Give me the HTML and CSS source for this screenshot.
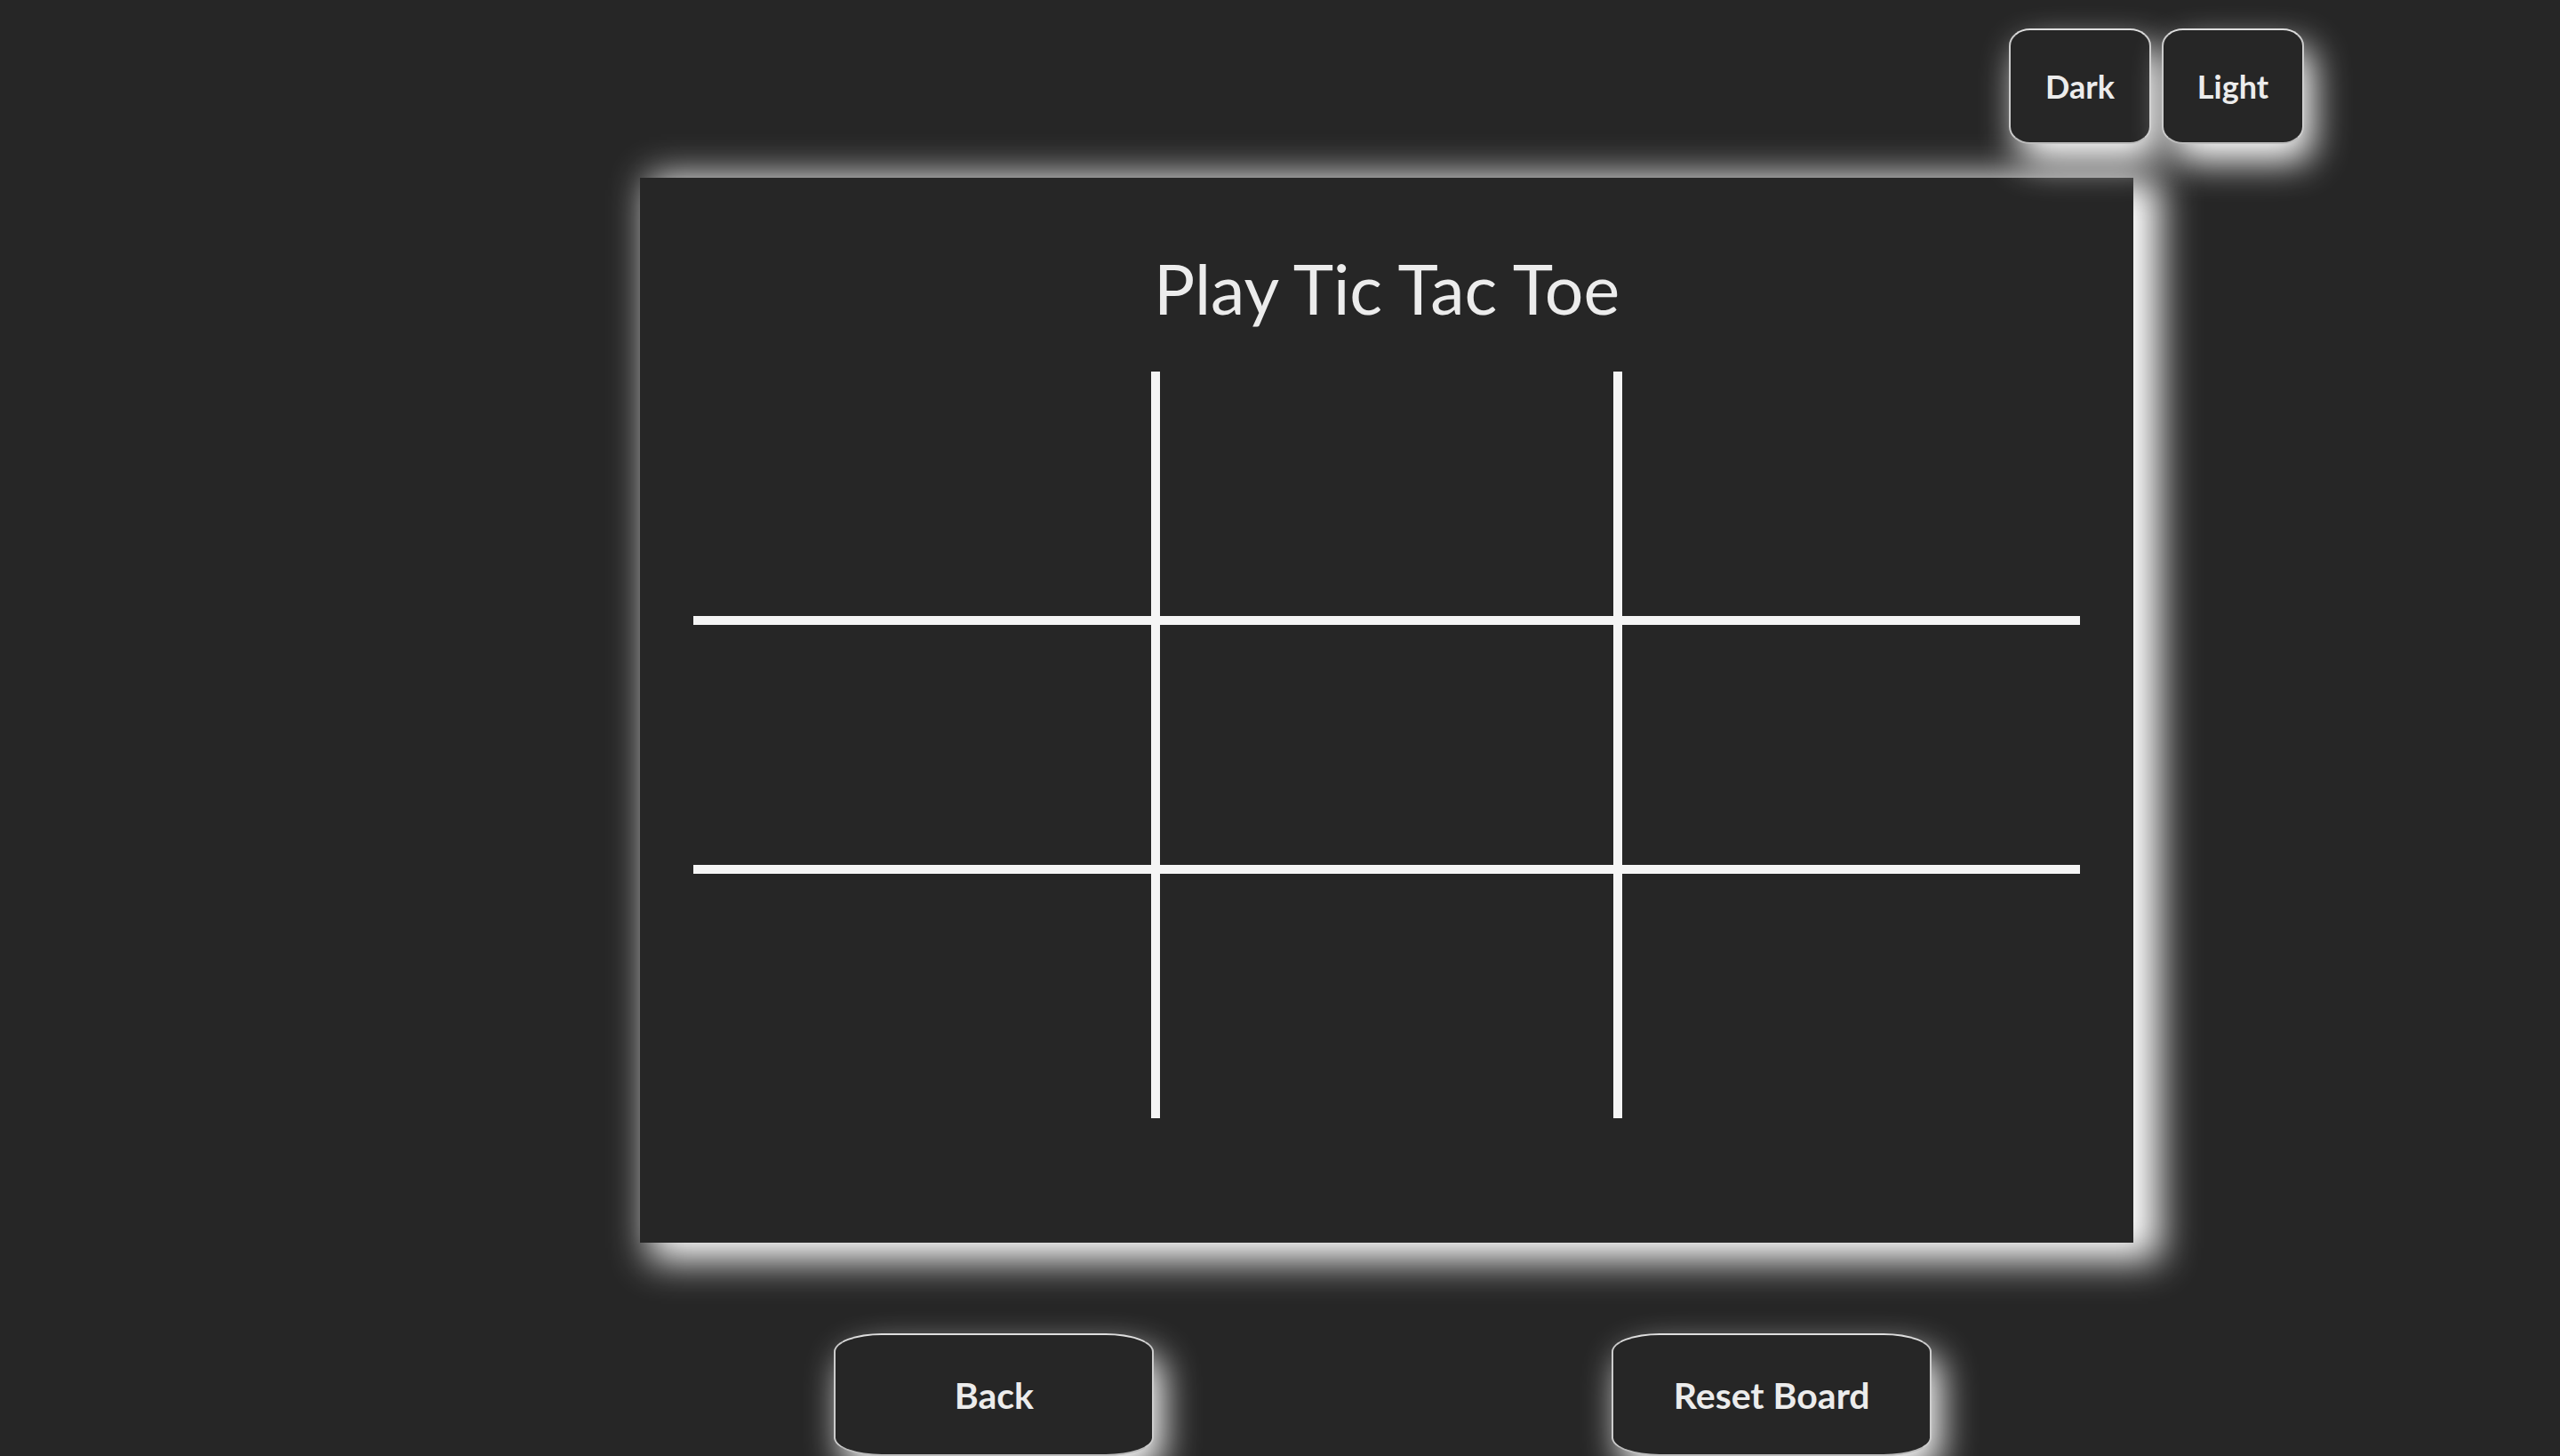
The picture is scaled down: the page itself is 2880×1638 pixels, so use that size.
FILE: index.html
```html
<!DOCTYPE html>
<html lang="en">
<head>
<meta charset="utf-8">
<meta name="viewport" content="width=device-width, initial-scale=1">
<title>Play Tic Tac Toe</title>
<link rel="stylesheet" href="styles.css">
</head>
<body>
<header class="themes">
  <button class="btn btn-theme" type="button">Dark</button>
  <button class="btn btn-theme" type="button">Light</button>
</header>
<main class="game">
  <section class="card">
    <h1 class="title">Play Tic Tac Toe</h1>
    <div class="board">
      <button class="cell" type="button"></button>
      <button class="cell" type="button"></button>
      <button class="cell" type="button"></button>
      <button class="cell" type="button"></button>
      <button class="cell" type="button"></button>
      <button class="cell" type="button"></button>
      <button class="cell" type="button"></button>
      <button class="cell" type="button"></button>
      <button class="cell" type="button"></button>
    </div>
  </section>
  <nav class="actions">
    <button class="btn btn-action" type="button">Back</button>
    <button class="btn btn-action" type="button">Reset Board</button>
  </nav>
</main>
</body>
</html>
```
FILE: styles.css
```css
* {
  box-sizing: border-box;
}

body {
  margin: 0;
  background: #262626;
  color: #ececec;
  font-family: Lato, "Open Sans", sans-serif;
}

/* Theme switch; its glow falls over the card below */
.themes {
  position: relative;
  z-index: 1;
  display: flex;
  justify-content: flex-end;
  gap: 12px;
  padding: 32px 10% 0 0;
}

.btn {
  padding: 0;
  border: 2px solid;
  border-color: #dedede #cccccc #bcbcbc;
  border-radius: 15%;
  background: #262626;
  box-shadow: 10px 20px 40px #fff;
  color: inherit;
  font-family: inherit;
  font-weight: 700;
}

.btn-theme {
  width: 160px;
  height: 130px;
  font-size: 36px;
}

.btn-action {
  width: 360px;
  height: 138px;
  font-size: 41px;
}

.game {
  margin: 38px calc(100% / 6) 0 25%;
}

.card {
  padding: 64px 60px 140px;
  background: #262626;
  box-shadow: 20px 10px 40px 10px #fff;
}

.title {
  margin: 0 0 34px;
  font-size: 77px;
  font-weight: 400;
  line-height: 120px;
  text-align: center;
}

.board {
  display: grid;
  grid-template-columns: repeat(3, 1fr);
  grid-auto-rows: 280px;
}

.cell {
  padding: 0;
  border: 0 solid #f5f5f5;
  background: none;
}

/* Neighbouring cells each draw half of a grid line */
.cell:not(:nth-child(3n)) {
  border-right-width: 5px;
}

.cell:not(:nth-child(3n + 1)) {
  border-left-width: 5px;
}

.cell:nth-child(-n + 6) {
  border-bottom-width: 5px;
}

.cell:nth-child(n + 4) {
  border-top-width: 5px;
}

.actions {
  display: flex;
  justify-content: space-between;
  padding: 102px 13.5% 0 13%;
}
```
